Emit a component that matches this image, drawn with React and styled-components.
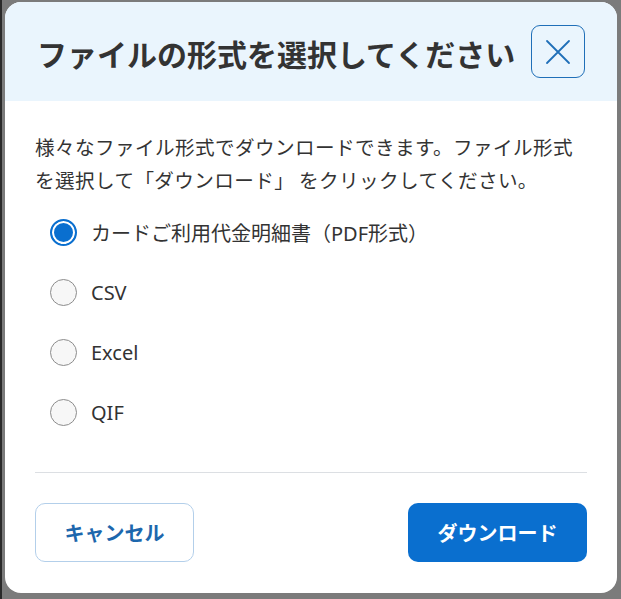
import React, { useState } from "react";
import styled, { createGlobalStyle } from "styled-components";

const Global = createGlobalStyle`
  html, body { margin: 0; padding: 0; }
  body {
    background: #7b7b7b;
    font-family: "Noto Sans", "Noto Sans CJK JP", sans-serif;
  }
  * { box-sizing: border-box; }
`;

const Overlay = styled.div`
  width: 621px;
  height: 599px;
  padding: 2px 4px 6px 3px;
  border-left: 2px solid #2a2a2a;
  display: flex;
`;

const Modal = styled.div`
  width: 612px;
  height: 591px;
  background: #fff;
  border-radius: 16px;
  overflow: hidden;
  display: flex;
  flex-direction: column;
`;

const Header = styled.div`
  height: 99px;
  background: #eaf5fd;
  display: flex;
  align-items: center;
  justify-content: space-between;
  padding: 0 32px 0 32px;
`;

const Title = styled.h1`
  margin: 0;
  font-family: "Noto Sans CJK JP", sans-serif;
  font-size: 30px;
  font-weight: 700;
  color: #333;
  letter-spacing: 0;
  padding-top: 2px;
`;

const CloseButton = styled.button`
  width: 54px;
  height: 53px;
  border: 1px solid #1f6fb8;
  border-radius: 9px;
  background: transparent;
  display: flex;
  align-items: center;
  justify-content: center;
  padding: 0;
  cursor: pointer;
`;

const Body = styled.div`
  flex: 1;
  display: flex;
  flex-direction: column;
  padding: 29px 30px 31px 30px;
`;

const Description = styled.p`
  margin: 0;
  font-family: "Noto Sans CJK JP", sans-serif;
  font-size: 19.6px;
  line-height: 33px;
  color: #333;
  letter-spacing: 0.4px;
`;

const Options = styled.div`
  margin-top: 6px;
  display: flex;
  flex-direction: column;
`;

const OptionRow = styled.label`
  height: 60px;
  display: flex;
  align-items: center;
  gap: 14px;
  padding-left: 15px;
  cursor: pointer;
`;

const RadioCircle = styled.span`
  width: 27px;
  height: 27px;
  border-radius: 50%;
  flex-shrink: 0;
  border: ${(p) => (p.$checked ? "2px solid #0a6fcf" : "1px solid #8c8c8c")};
  background: ${(p) => (p.$checked ? "#0a6fcf" : "#f7f7f7")};
  box-shadow: ${(p) => (p.$checked ? "inset 0 0 0 2px #fff" : "none")};
`;

const OptionLabel = styled.span`
  font-family: "Noto Sans", "Noto Sans CJK JP", sans-serif;
  font-size: 20px;
  color: #333;
  padding-top: 1px;
`;

const Divider = styled.hr`
  margin: 30px 0 0 0;
  border: none;
  border-top: 1px solid #dcdfe3;
`;

const Footer = styled.div`
  margin-top: 30px;
  display: flex;
  justify-content: space-between;
  align-items: center;
`;

const Button = styled.button`
  height: 59px;
  border-radius: 10px;
  font-family: "Noto Sans CJK JP", sans-serif;
  font-size: 20px;
  font-weight: 700;
  cursor: pointer;
  width: ${(p) => (p.$primary ? "179px" : "159px")};
  background: ${(p) => (p.$primary ? "#0a6fcf" : "#fff")};
  color: ${(p) => (p.$primary ? "#fff" : "#1d67ad")};
  border: ${(p) => (p.$primary ? "none" : "1px solid #b3cfea")};
`;

const options = [
  "カードご利用代金明細書（PDF形式）",
  "CSV",
  "Excel",
  "QIF",
];

export default function App() {
  const [selected, setSelected] = useState(0);
  return (
    <>
      <Global />
      <Overlay>
        <Modal>
          <Header>
            <Title>ファイルの形式を選択してください</Title>
            <CloseButton aria-label="閉じる">
              <svg width="26" height="26" viewBox="0 0 26 26" fill="none">
                <path
                  d="M2 2 L24 24 M24 2 L2 24"
                  stroke="#1f6fb8"
                  strokeWidth="1.8"
                  strokeLinecap="round"
                />
              </svg>
            </CloseButton>
          </Header>
          <Body>
            <Description>
              様々なファイル形式でダウンロードできます。ファイル形式
              <br />
              を選択して「ダウンロード」 をクリックしてください。
            </Description>
            <Options>
              {options.map((o, i) => (
                <OptionRow key={o} onClick={() => setSelected(i)}>
                  <RadioCircle $checked={selected === i} />
                  <OptionLabel>{o}</OptionLabel>
                </OptionRow>
              ))}
            </Options>
            <Divider />
            <Footer>
              <Button>キャンセル</Button>
              <Button $primary>ダウンロード</Button>
            </Footer>
          </Body>
        </Modal>
      </Overlay>
    </>
  );
}
